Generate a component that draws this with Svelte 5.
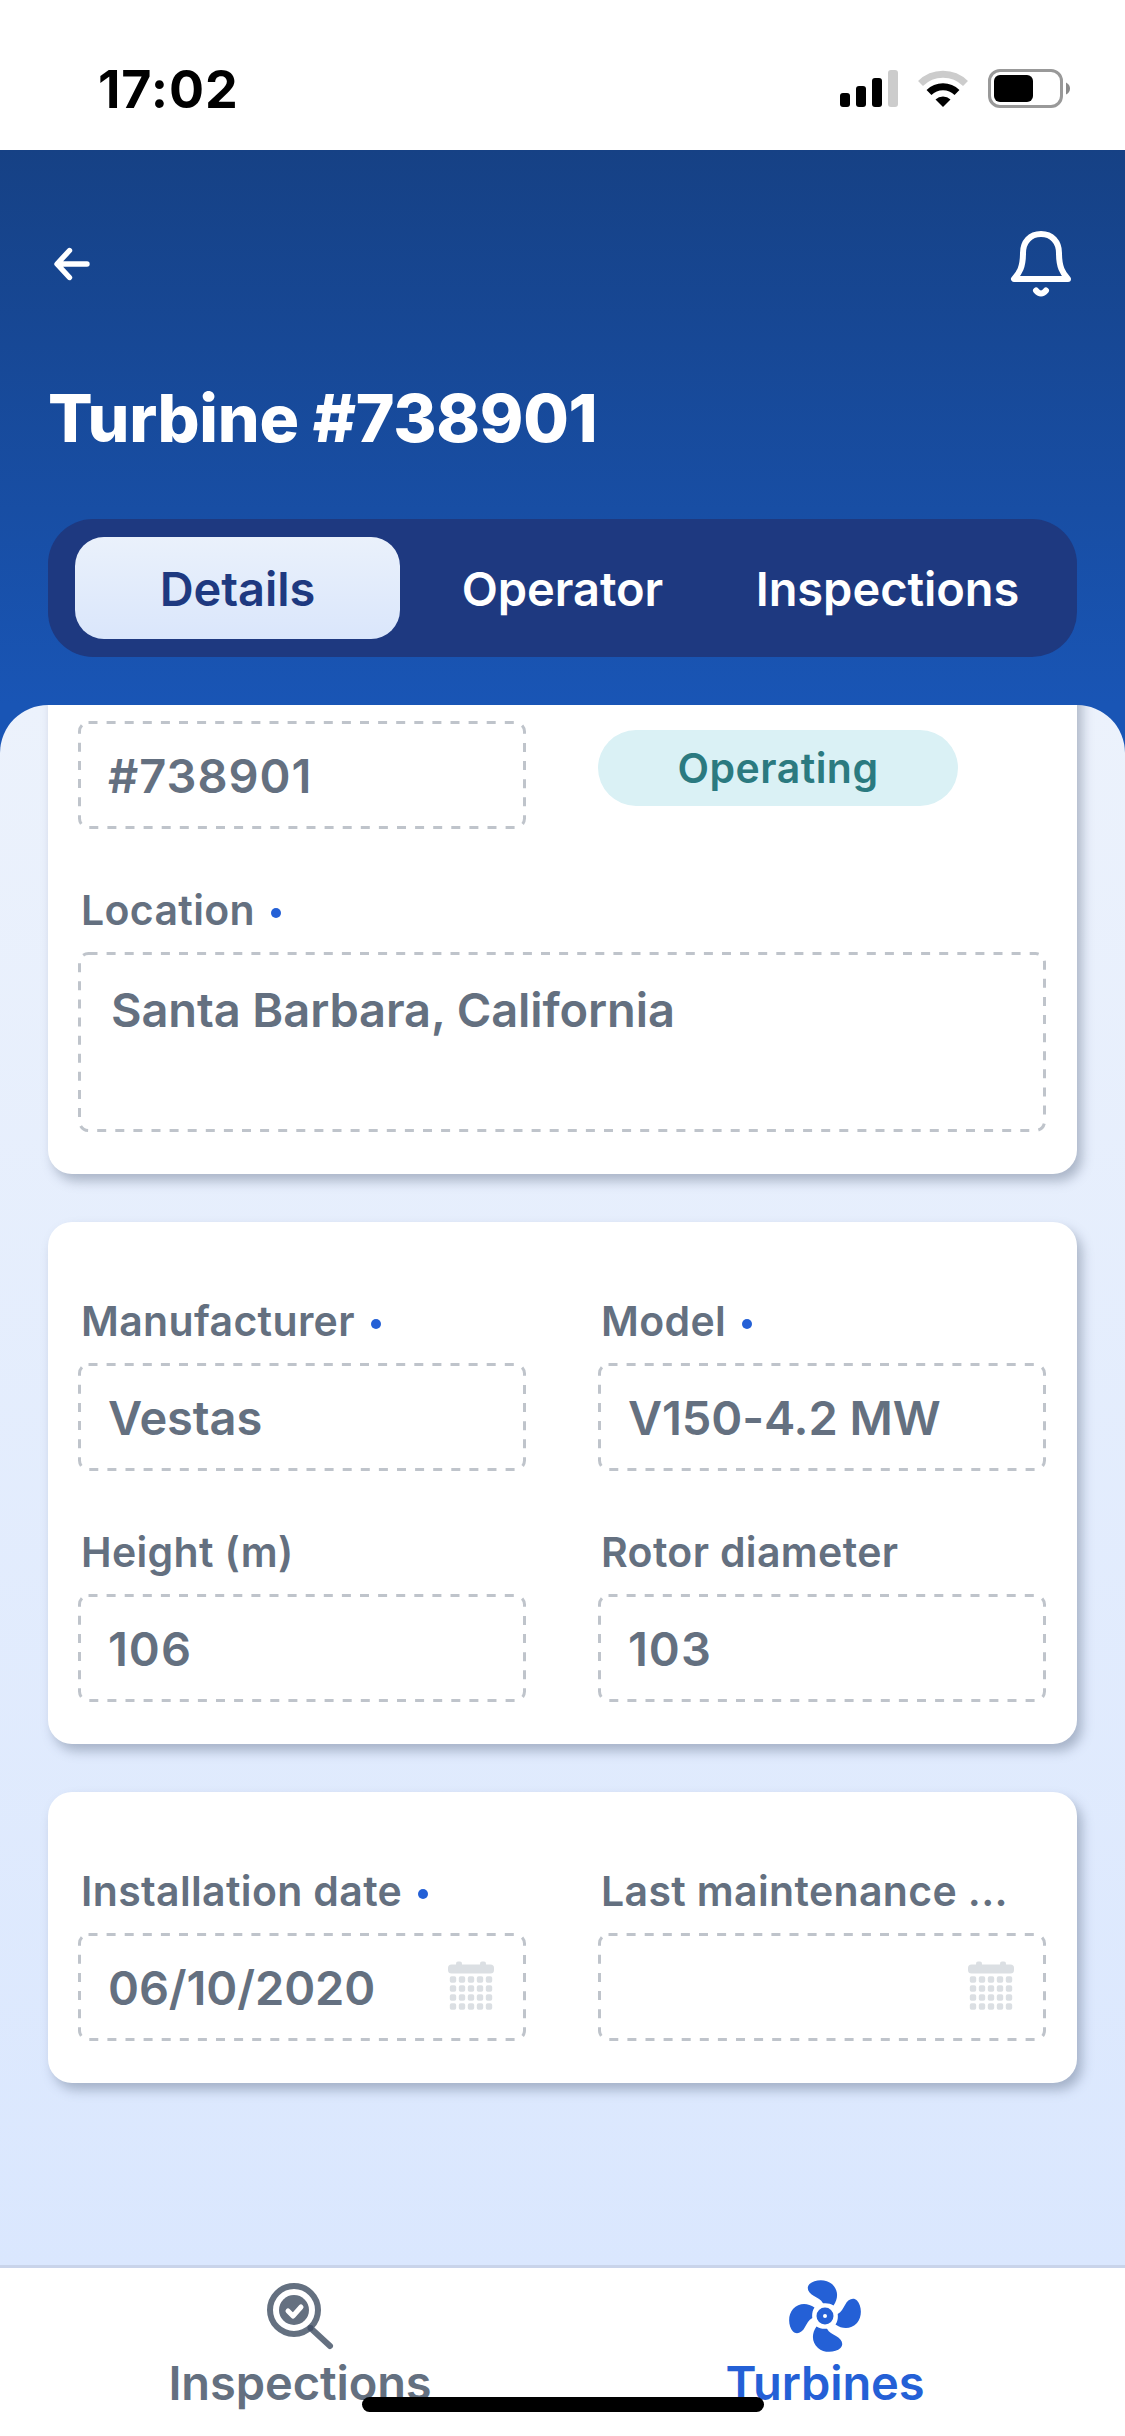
<script>
  const tabs = ['Details', 'Operator', 'Inspections'];
  let activeTab = 'Details';

  const cards = [
    [
      { value: '#738901', numeric: true },
      { value: 'Operating', type: 'status' },
      { label: 'Location', value: 'Santa Barbara, California', required: true, type: 'area' }
    ],
    [
      { label: 'Manufacturer', value: 'Vestas', required: true },
      { label: 'Model', value: 'V150-4.2 MW', required: true },
      { label: 'Height (m)', value: '106', numeric: true },
      { label: 'Rotor diameter', value: '103', numeric: true }
    ],
    [
      { label: 'Installation date', value: '06/10/2020', required: true, type: 'date' },
      { label: 'Last maintenance ...', value: '', type: 'date' }
    ]
  ];

  const steps = [0, 1, 2, 3, 4];
</script>

<div class="screen">
  <div class="status-bar">
    <span class="time">17:02</span>
    <div class="status-icons">
      <svg width="58" height="38" viewBox="0 0 58 38">
        <rect x="0" y="23" width="10" height="14" rx="3" />
        <rect x="16" y="16" width="10" height="21" rx="3" />
        <rect x="32" y="8" width="10" height="29" rx="3" />
        <rect x="48" y="0" width="10" height="37" rx="3" fill="#ccc" />
      </svg>
      <svg width="50" height="38" viewBox="0 0 50 38">
        <path d="M2.5 13.5a32 32 0 0 1 45 0" fill="none" stroke="#ccc" stroke-width="7" />
        <path d="M11 22.5a20 20 0 0 1 28 0" fill="none" stroke="#000" stroke-width="7" />
        <path d="M17.500 29.500a11 11 0 0 1 15 0L25 37z" />
      </svg>
      <svg class="battery" width="83" height="40" viewBox="0 0 83 40">
        <rect x="1.500" y="1.500" width="72" height="36" rx="10.500" fill="none" stroke="#999" stroke-width="3" />
        <rect x="6" y="6" width="39" height="27" rx="6" />
        <path d="M78 13.500q4 2 4 6t-4 6z" fill="#8a8a8a" />
      </svg>
    </div>
  </div>

  <header>
    <div class="toolbar">
      <button class="icon-btn" aria-label="Back">
        <svg width="40" height="40" viewBox="0 0 40 40">
          <path d="M19.500 6.500L7 20L19.500 33.500M7.500 20H37" fill="none" stroke="#fff" stroke-width="5.400" stroke-linecap="round" stroke-linejoin="round" />
        </svg>
      </button>
      <button class="icon-btn" aria-label="Notifications">
        <svg width="62" height="70" viewBox="0 0 62 70">
          <path d="M31 5C20 5 13 13 13 24C13 38 9.500 44 4 50H58C52.500 44 49 38 49 24C49 13 42 5 31 5Z" fill="none" stroke="#fff" stroke-width="6" stroke-linejoin="round" />
          <path d="M26 61.500Q31 67.500 36 61.500" fill="none" stroke="#fff" stroke-width="6" stroke-linecap="round" />
        </svg>
      </button>
    </div>
    <h1>Turbine #738901</h1>
    <div class="tabs">
      {#each tabs as tab}
        <button class="tab" class:active={tab === activeTab} on:click={() => (activeTab = tab)}>{tab}</button>
      {/each}
    </div>
  </header>

  <main>
    <div class="scroll">
      {#each cards as fields}
        <section class="card">
          {#each fields as field}
            <div class="field" class:wide={field.type === 'area'}>
              <div class="label">
                {field.label ?? ''}
                {#if field.required}<i class="dot"></i>{/if}
              </div>
              {#if field.type === 'status'}
                <div class="pill">{field.value}</div>
              {:else}
                <div class="input" class:area={field.type === 'area'} class:numeric={field.numeric}>
                  <svg class="outline" width="100%" height="100%">
                    <rect x="1.500" y="1.500" rx="9" />
                  </svg>
                  <span>{field.value}</span>
                  {#if field.type === 'date'}
                    <svg class="calendar" width="48" height="50" viewBox="0 0 48 50">
                      <rect x="1" y="3.500" width="46" height="9" rx="3.500" />
                      <rect x="9" y="0.500" width="6" height="6" rx="2" />
                      <rect x="33" y="0.500" width="6" height="6" rx="2" />
                      {#each steps as col}
                        {#each steps.slice(0, 4) as row}
                          <rect x={2.8 + col * 9} y={15.3 + row * 9} width="6.400" height="6.400" rx="1.800" />
                        {/each}
                      {/each}
                    </svg>
                  {/if}
                </div>
              {/if}
            </div>
          {/each}
        </section>
      {/each}
    </div>
  </main>

  <nav>
    <button class="nav-item">
      <svg width="72" height="72" viewBox="0 0 72 72">
        <circle cx="30" cy="30" r="24" fill="none" stroke="#647080" stroke-width="6" />
        <circle cx="30" cy="30" r="15" fill="#647080" />
        <path d="M24 31l5 5l8-9" fill="none" stroke="#fff" stroke-width="5" stroke-linecap="round" stroke-linejoin="round" />
        <path d="M46.500 48L66 66" stroke="#647080" stroke-width="6" stroke-linecap="round" />
        <circle cx="46.500" cy="48" r="3" fill="#46536a" />
      </svg>
      <span>Inspections</span>
    </button>
    <button class="nav-item current">
      <svg width="72" height="72" viewBox="0 0 72 72">
        {#each [0, 90, 180, 270] as angle}
          <path transform="rotate({angle} 36 36)" d="M44.500 25.500C41.500 23.500 38 22.800 34 23.300C32 19.500 28.500 18 25 16C19 13 17 7.500 20.500 4C25.500 -0.800 37 -1.500 43 4C49.500 10 49.500 18.500 44.500 25.500Z" fill="#2460d6" />
        {/each}
        <circle cx="36" cy="36" r="5.250" fill="none" stroke="#2460d6" stroke-width="6.500" />
      </svg>
      <span>Turbines</span>
    </button>
    <div class="home-indicator"></div>
  </nav>
</div>

<style>
  :global(body) {
    background: #fff;
  }

  .screen {
    width: 1125px;
    height: 2436px;
    display: flex;
    flex-direction: column;
    overflow: hidden;
    font-family: Inter, 'Liberation Sans', sans-serif;
    color: #647080;
    background: #fff;
  }

  button {
    border: 0;
    padding: 0;
    margin: 0;
    background: none;
    font: inherit;
    color: inherit;
  }

  svg {
    display: block;
    flex: none;
  }

  .status-bar {
    height: 150px;
    flex: none;
    box-sizing: border-box;
    padding: 59px 54px 0 98px;
    display: flex;
    justify-content: space-between;
    color: #000;
  }

  .time {
    font-size: 52px;
    font-weight: 700;
    line-height: 62px;
    letter-spacing: 0.9px;
  }

  .status-icons {
    display: flex;
    padding-top: 11px;
    gap: 20px;
  }

  .battery {
    margin-top: -1px;
  }

  header {
    height: 603px;
    flex: none;
    box-sizing: border-box;
    padding: 77px 48px 0;
    background: linear-gradient(#164185, #1955b5 92%);
  }

  .toolbar {
    display: flex;
    justify-content: space-between;
    align-items: center;
    height: 74px;
    padding: 0 5px 0 2px;
  }

  h1 {
    margin: 77px 0 0;
    font-size: 66px;
    line-height: 80px;
    font-weight: 800;
    letter-spacing: -0.3px;
    color: #fff;
    white-space: nowrap;
  }

  .tabs {
    margin-top: 61px;
    height: 138px;
    box-sizing: border-box;
    padding: 18px 27px;
    border-radius: 45px;
    background: #1e3980;
    display: grid;
    grid-template-columns: repeat(3, 325px);
  }

  .tab {
    border-radius: 29px;
    color: #fff;
    font-size: 47px;
    font-weight: 600;
    letter-spacing: -0.05px;
  }

  .tab.active {
    background: linear-gradient(#eaf1fb, #dae6fb);
    color: #1e3980;
  }

  main {
    flex: 1;
    min-height: 0;
    margin-top: -48px;
    border-radius: 48px 48px 0 0;
    background: linear-gradient(#ecf2fc, #dae7fe);
    overflow: hidden;
  }

  /* list is scrolled, the first row of labels sits above the fold */
  .scroll {
    margin-top: -125px;
    padding: 0 48px;
    display: flex;
    flex-direction: column;
    gap: 48px;
  }

  .card {
    border-radius: 24px;
    padding: 66px 31px 42px 30px;
    background: #fff;
    box-shadow: 5px 7px 12px rgba(80, 95, 120, 0.4);
    display: grid;
    grid-template-columns: 448px 448px;
    justify-content: space-between;
    row-gap: 48px;
  }

  .wide {
    grid-column: span 2;
  }

  .label {
    height: 75px;
    box-sizing: border-box;
    padding: 8px 0 0 3px;
    display: flex;
    align-items: flex-start;
    font-size: 41px;
    font-weight: 600;
    line-height: 50px;
    letter-spacing: 0.35px;
    white-space: nowrap;
  }

  .dot {
    width: 10px;
    height: 10px;
    margin: 23px 0 0 16px;
    border-radius: 50%;
    background: #2460d6;
  }

  .input {
    position: relative;
    height: 108px;
    box-sizing: border-box;
    padding: 2px 31px 0 30px;
    display: flex;
    align-items: center;
    justify-content: space-between;
    font-size: 47px;
    font-weight: 600;
    line-height: 60px;
    letter-spacing: -0.1px;
  }

  .input.area {
    height: 180px;
    align-items: flex-start;
    padding: 28px 33px 0;
  }

  .input.numeric {
    letter-spacing: 1px;
  }

  .outline {
    position: absolute;
    inset: 0;
  }

  .outline rect {
    width: calc(100% - 3px);
    height: calc(100% - 3px);
    fill: none;
    stroke: #bfc4cb;
    stroke-width: 3px;
    stroke-dasharray: 9 9.1;
  }

  .calendar {
    fill: #dbdfe3;
    margin-top: -4px;
  }

  .pill {
    margin-top: 9px;
    width: 360px;
    height: 76px;
    border-radius: 38px;
    background: #daf1f5;
    color: #2b7a80;
    font-size: 41px;
    font-weight: 600;
    line-height: 77px;
    letter-spacing: 0.5px;
    text-align: center;
  }

  nav {
    position: relative;
    height: 171px;
    flex: none;
    box-sizing: border-box;
    border-top: 3px solid #c9d4ea;
    display: grid;
    grid-template-columns: 600px 450px;
    background: #fff;
  }

  .nav-item {
    display: flex;
    flex-direction: column;
    align-items: center;
    padding-top: 12px;
    font-size: 47px;
    font-weight: 600;
    line-height: 58px;
    letter-spacing: -0.1px;
  }

  .nav-item span {
    margin-top: 2px;
  }

  .current {
    color: #2460d6;
  }

  .home-indicator {
    position: absolute;
    left: 362px;
    bottom: 24px;
    width: 402px;
    height: 15px;
    border-radius: 8px;
    background: #000;
  }
</style>
